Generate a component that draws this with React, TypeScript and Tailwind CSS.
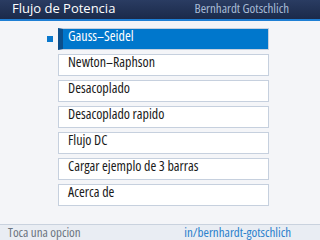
import React from 'react';

const options = [
  'Gauss–Seidel',
  'Newton–Raphson',
  'Desacoplado',
  'Desacoplado rapido',
  'Flujo DC',
  'Cargar ejemplo de 3 barras',
  'Acerca de',
];

const App = () => {
  const selected = 0;

  return (
    <div className="w-[320px] h-[240px] flex flex-col bg-[#f4f5f8] font-['Open_Sans',sans-serif] overflow-hidden">
      {/* Header */}
      <div className="h-[21px] shrink-0 flex items-center justify-between pl-3 pr-[31px] pb-[2px] bg-gradient-to-b from-[#2a3c62] to-[#1b2a4a] border-b-2 border-[#1f7fd4]">
        <span className="text-[13px] leading-none text-white">Flujo de Potencia</span>
        <span className="text-[13px] leading-none text-[#a9bcd6] [font-stretch:80%]">Bernhardt Gotschlich</span>
      </div>

      {/* Menu */}
      <div className="flex-1 flex flex-col gap-[4px] pt-[7px] pl-[47px]">
        {options.map((label, i) => (
          <div key={label} className="flex items-center gap-[5px]">
            <div className={`w-[6px] h-[6px] ${i === selected ? 'bg-[#0a78cc]' : 'bg-transparent'}`} />
            <div
              className={`w-[211px] h-[22px] border text-[14px] leading-[13px] [font-stretch:80%] ${
                i === selected
                  ? 'bg-[#0077cc] border-[#c6d0de] text-white border-l-[5px] border-l-[#0b4f8c] pl-[5px]'
                  : 'bg-white border-[#c6d0de] text-[#1a1a1a] pl-[9px]'
              }`}
            >
              {label}
            </div>
          </div>
        ))}
      </div>

      {/* Footer */}
      <div className="h-[16px] shrink-0 flex items-center justify-between pl-2 pr-[29px] bg-[#e9edf3] border-t border-[#c9d2de] [font-stretch:80%]">
        <span className="text-[13px] leading-none text-[#6b7480]">Toca una opcion</span>
        <span className="text-[13px] leading-none text-[#2a80cc]">in/bernhardt-gotschlich</span>
      </div>
    </div>
  );
};

export default App;
